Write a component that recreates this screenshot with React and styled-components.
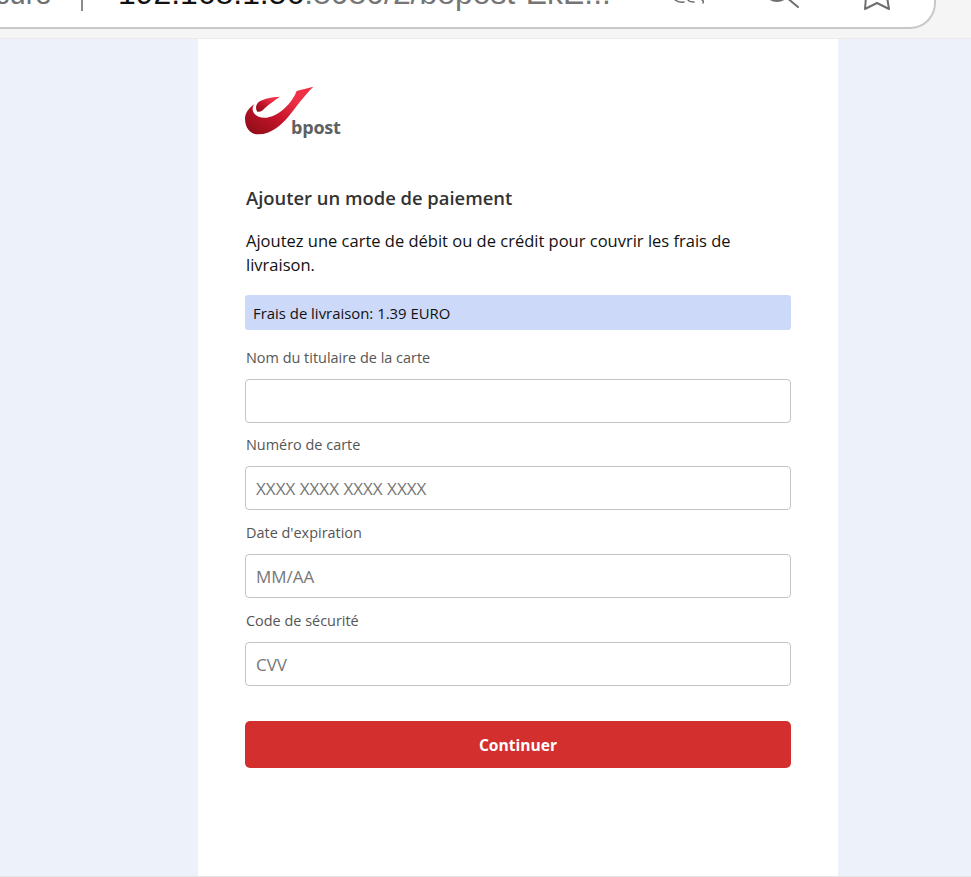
import React from "react";
import styled, { createGlobalStyle } from "styled-components";

const Global = createGlobalStyle`
  html, body { margin: 0; padding: 0; }
  body { font-family: "Open Sans", "Noto Sans", "Liberation Sans", sans-serif; background: #edf1fa; }
  * { box-sizing: border-box; }
`;

const Page = styled.div`
  width: 971px;
  height: 877px;
  display: flex;
  flex-direction: column;
  overflow: hidden;
  background: #edf1fa;
  border-bottom: 1px solid #e4e4e4;
`;

const Chrome = styled.div`
  height: 39px;
  flex: none;
  background: #f5f5f5;
  border-bottom: 1px solid #ebebeb;
`;

const AddressBar = styled.div`
  width: 936px;
  height: 29px;
  background: #fff;
  border: solid #c8c8c8;
  border-width: 0 2px 2px 0;
  border-bottom-right-radius: 26px;
  display: flex;
  align-items: flex-start;
  overflow: hidden;
  color: #757575;
`;

const Secure = styled.span`
  font-size: 29px;
  line-height: 32px;
  margin: -22px 0 0 -5px;
  width: 86px;
  flex: none;
  color: #6f6f6f;
  font-family: "Liberation Sans", sans-serif;
`;

const Divider = styled.span`
  width: 2px;
  height: 11px;
  background: #8a8a8a;
  flex: none;
  margin-right: 35px;
`;

const Url = styled.span`
  font-family: "Liberation Sans", sans-serif;
  font-size: 31.9px;
  line-height: 32px;
  white-space: nowrap;
  color: #757575;
  width: 554px;
  flex: none;
  margin-top: -23px;
`;

const UrlHost = styled.span`
  color: #111;
`;

const ToolIcons = styled.div`
  flex: none;
  display: flex;
  color: #6f6f6f;
`;

const Main = styled.main`
  flex: 1;
  display: flex;
  padding-left: 198px;
`;

const Card = styled.div`
  width: 640px;
  background: #fff;
  padding: 44px 47px 0;
  display: flex;
  flex-direction: column;
`;

const Logo = styled.div`
  height: 56px;
  flex: none;
`;

const Heading = styled.h1`
  margin: 45px 0 0 1px;
  font-size: 18.4px;
  line-height: 28px;
  font-weight: 600;
  color: #333;
`;

const Intro = styled.p`
  margin: 17px 0 0 1px;
  font-size: 16.5px;
  line-height: 24px;
  color: #111;
`;

const Fee = styled.div`
  margin-top: 18px;
  height: 35px;
  padding: 0 8px;
  display: flex;
  align-items: center;
  background: #cdd9f9;
  border-radius: 3px;
  font-size: 14.9px;
  color: #111;
`;

const Form = styled.form`
  display: flex;
  flex-direction: column;
  margin-top: 15.8px;
`;

const Field = styled.label`
  display: flex;
  flex-direction: column;
  margin-bottom: 10.6px;
`;

const Label = styled.span`
  height: 23px;
  margin: 0 0 10px 1px;
  font-size: 14.45px;
  line-height: 23px;
  color: #555;
`;

const Input = styled.input`
  width: 100%;
  height: 44px;
  padding: 1px 10px 0;
  border: 1px solid #c4c4c4;
  border-radius: 4px;
  background: #fff;
  font: inherit;
  font-size: 17px;
  &::placeholder { color: #777; opacity: 1; }
`;

const Button = styled.button`
  margin-top: 25px;
  height: 47px;
  width: 100%;
  border: 0;
  border-radius: 5px;
  background: #d32f2f;
  color: #fff;
  font: inherit;
  font-size: 15.6px;
  font-weight: 700;
`;

const BpostLogo = () => (
  <svg width="100" height="56" viewBox="0 0 100 56" style={{ display: "block" }}>
    <defs>
      <linearGradient id="bp" x1="0" y1="1" x2="1" y2="0">
        <stop offset="0.05" stopColor="#8f0d17" />
        <stop offset="0.4" stopColor="#c3142a" />
        <stop offset="0.72" stopColor="#ee2f45" />
      </linearGradient>
    </defs>
    <g transform="scale(0.3333) translate(-45 -24)">
      <path d="M250 35 L200 48 C190 75 165 105 135 120 C110 133 85 130 74 117 C66 107 66 98 73 88 C55 100 45 115 45 132 C46 165 65 178 85 178 C125 178 155 148 175 125 C195 100 220 65 250 35 Z" fill="url(#bp)" />
      <path d="M150 65 C125 66 100 72 87 80 C77 88 76 100 82 110 C92 112 98 106 105 99 C118 87 135 75 150 65 Z" fill="url(#bp)" />
    </g>
    <text x="46" y="51" fontFamily="'Open Sans', sans-serif" fontWeight="700" fontSize="18" letterSpacing="-0.2" fill="#5f6062">bpost</text>
  </svg>
);

const Tools = () => (
  <svg width="240" height="12" viewBox="0 0 240 12" fill="none" stroke="#6f6f6f" strokeWidth="2" strokeLinecap="round" strokeLinejoin="round" style={{ display: "block" }}>
    <path d="M3 0 Q7 3 12 2 M16 0 Q17 2 22 2 M30 0 Q32 1 31 3" strokeWidth="1.5" />
    <circle cx="105" cy="-12" r="13" />
    <path d="M114 -3 L126 7" />
    <path d="M194 -3 L193 9 L205 3 L217 9 L215 -3" />
  </svg>
);

const fields = [
  { label: "Nom du titulaire de la carte", placeholder: "" },
  { label: "Numéro de carte", placeholder: "XXXX XXXX XXXX XXXX" },
  { label: "Date d'expiration", placeholder: "MM/AA" },
  { label: "Code de sécurité", placeholder: "CVV" },
];

export default function App() {
  return (
    <Page>
      <Global />
      <Chrome>
        <AddressBar>
          <Secure>cure</Secure>
          <Divider />
          <Url><UrlHost>192.168.1.56</UrlHost>:8080/2/bepost-EkE...</Url>
          <ToolIcons><Tools /></ToolIcons>
        </AddressBar>
      </Chrome>
      <Main>
        <Card>
          <Logo><BpostLogo /></Logo>
          <Heading>Ajouter un mode de paiement</Heading>
          <Intro>Ajoutez une carte de débit ou de crédit pour couvrir les frais de livraison.</Intro>
          <Fee>Frais de livraison: 1.39 EURO</Fee>
          <Form>
            {fields.map((f) => (
              <Field key={f.label}>
                <Label>{f.label}</Label>
                <Input placeholder={f.placeholder} />
              </Field>
            ))}
            <Button type="button">Continuer</Button>
          </Form>
        </Card>
      </Main>
    </Page>
  );
}
